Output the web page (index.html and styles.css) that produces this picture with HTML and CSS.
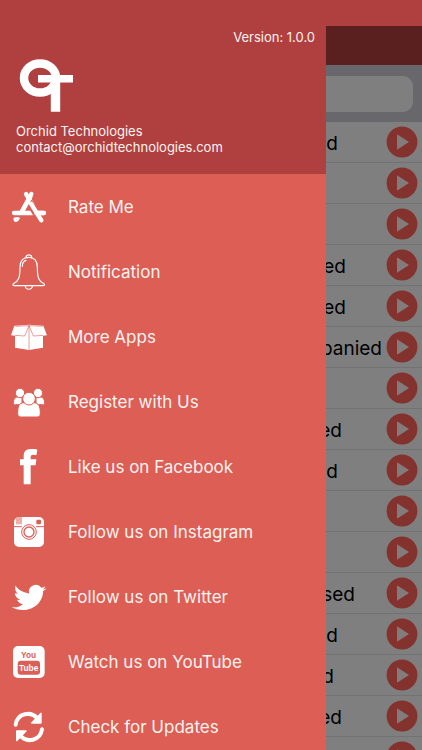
FILE: index.html
```html
<!DOCTYPE html>
<html lang="en">
<head>
    <meta charset="UTF-8">
    <meta name="viewport" content="width=device-width, initial-scale=1.0">
    <title>Orchid Technologies</title>
    <link rel="stylesheet" href="styles.css">
</head>
<body>
    <svg class="sprite" aria-hidden="true">
        <symbol id="play" viewBox="0 0 32 32">
            <circle cx="16" cy="16" r="15.4" fill="#84322e"/>
            <path d="M11 8.2v15.6L23 16z" fill="#827c7c"/>
        </symbol>
    </svg>
    <div class="screen">
        <aside class="drawer">
            <header class="profile">
                <div class="version">Version: 1.0.0</div>
                <svg class="logo" viewBox="0 0 56 54" aria-label="Orchid Technologies logo">
                    <ellipse cx="24" cy="20" rx="16" ry="14.6" fill="none" stroke="#fff" stroke-width="8.5"/>
                    <path d="M22 17h35v7.6H44.2v29.2h-9.4V24.6H22z" fill="#fff"/>
                </svg>
                <div class="company">Orchid Technologies</div>
                <div class="email">contact@orchidtechnologies.com</div>
            </header>
            <nav class="menu">
                <a href="#rate">
                    <svg viewBox="0 0 108 108" fill="none" stroke="#fff" stroke-width="13" stroke-linecap="round">
                        <path d="M9 72h90"/>
                        <path d="M61 15L31 70"/>
                        <path d="M45 15L64 46" />
                        <path d="M54 37l37 66" stroke="#dc5e55" stroke-width="20" stroke-linecap="butt"/>
                        <path d="M76 72h22"/>
                        <path d="M60 44l31 50"/>
                        <path d="M58 24L33 68"/>
                        <path d="M8 86c7-3 13-3 19 0-2 6-5 12-12 13-6 0-9-6-7-13z" fill="#fff" stroke="none"/>
                    </svg>
                    <span>Rate Me</span>
                </a>
                <a href="#notification">
                    <svg viewBox="0 0 108 108" fill="none" stroke="#fff" stroke-width="3.5" stroke-linecap="round" stroke-linejoin="round">
                        <path d="M53 10C35 10 27 22 27 40c0 30-4 41-18 48-5 3-4 7 1 7h86c5 0 6-4 1-7-14-7-18-18-18-48 0-18-8-30-26-30z"/>
                        <path d="M45 11c0-11 17-11 17 0M43 96c1 13 20 13 21 0M34 37c0-10 4-16 11-18"/>
                    </svg>
                    <span>Notification</span>
                </a>
                <a href="#apps">
                    <svg viewBox="0 0 108 108">
                        <path d="M10 20l44-3 43 3 11 29-12 1v36l-42 7-42-7V50L0 49z" fill="#fff"/>
                        <path d="M12 49l29 2 13-31 13 31 29-2M54 20v72M13 22l41-2 41 2" fill="none" stroke="#dc5e55" stroke-width="1.8"/>
                    </svg>
                    <span>More Apps</span>
                </a>
                <a href="#register">
                    <svg viewBox="0 0 108 108" fill="#fff" stroke="#dc5e55" stroke-width="3">
                        <path d="M7 60c0-17 6-21 16-21h10v23H13c-4 0-6 0-6-2zM101 60c0-17-6-21-16-21H75v23h20c4 0 6 0 6-2z"/>
                        <circle cx="27" cy="27" r="14"/>
                        <circle cx="81" cy="27" r="14"/>
                        <path d="M20 89c0-23 4-32 19-33 9 6 20 6 29 0 15 1 20 10 20 33 0 7-4 10-11 10H31c-7 0-11-3-11-10z"/>
                        <circle cx="54" cy="44" r="19"/>
                    </svg>
                    <span>Register with Us</span>
                </a>
                <a href="#facebook">
                    <svg viewBox="0 0 108 108">
                        <path d="M38 106V49H27V31h11V22C38 6 45 0 60 0c8 0 14 0 19 2l-3 17c-10-3-17-2-17 6v6h17l-2 18H59v57z" fill="#fff"/>
                    </svg>
                    <span>Like us on Facebook</span>
                </a>
                <a href="#instagram">
                    <svg viewBox="0 0 108 108">
                        <rect x="9" y="9" width="90" height="90" rx="15" fill="#fff"/>
                        <g fill="none" stroke="#dc5e55" stroke-width="3">
                            <path d="M18 11v20M24 9v22M30 9v22M9 38h24M75 38h24"/>
                            <circle cx="54" cy="54" r="22"/>
                            <circle cx="54" cy="54" r="15" stroke-width="4"/>
                        </g>
                        <rect x="76" y="17" width="14" height="14" rx="3" fill="#dc5e55"/>
                    </svg>
                    <span>Follow us on Instagram</span>
                </a>
                <a href="#twitter">
                    <svg viewBox="0 0 24 24">
                        <path d="M23.8 6.200a7 7 0 0 1-2.600.8 4.500 4.500 0 0 0 1.800-2.200 8 8 0 0 1-2.700 1 4.600 4.600 0 0 0-8.200 3.800C8.500 9 5 7.500 3 4.300c-.6 2.200 0 4.200 1.600 5.600-.8 0-1.500-.2-2-.5 0 2 1.300 3.800 3.400 4.400-.6.200-1.300.200-1.900.1.600 1.700 2 2.700 3.900 2.900-2 1.700-4.600 2.400-7.700 1.900 2.200 1.400 4.700 2 7.400 2 8.600 0 13.700-6.200 13.700-12.700 1-.5 1.700-1.100 2.400-1.800z" fill="#fff"/>
                    </svg>
                    <span>Follow us on Twitter</span>
                </a>
                <a href="#youtube">
                    <svg class="youtube" viewBox="0 0 108 108" text-anchor="middle">
                        <rect x="6" y="6" width="95" height="96" rx="15" fill="#fff"/>
                        <rect x="20" y="50" width="67" height="42" rx="9" fill="#dc5e55"/>
                        <text x="53" y="42" fill="#dc5e55">You</text>
                        <text x="53" y="80" fill="#fff">Tube</text>
                    </svg>
                    <span>Watch us on YouTube</span>
                </a>
                <a href="#updates">
                    <svg viewBox="0 0 108 108" fill="none" stroke="#fff" stroke-width="12" stroke-linecap="round">
                        <path d="M14 47C19 12 60 5 80 29M93 61C88 96 47 103 27 79"/>
                        <path d="M90 13v29H62zM17 95V66h28z" fill="#fff" stroke-width="4" stroke-linejoin="round"/>
                    </svg>
                    <span>Check for Updates</span>
                </a>
            </nav>
        </aside>
        <main class="verbs">
            <div class="status-bar"></div>
            <div class="title-bar"></div>
            <div class="search"><input type="search" aria-label="Search"></div>
            <ul class="list">
                <li><span class="end-s">ed</span><button aria-label="Play"><svg><use href="#play"/></svg></button></li>
                <li><span></span><button aria-label="Play"><svg><use href="#play"/></svg></button></li>
                <li><span></span><button aria-label="Play"><svg><use href="#play"/></svg></button></li>
                <li><span class="end-l">ed</span><button aria-label="Play"><svg><use href="#play"/></svg></button></li>
                <li><span class="end-l">ed</span><button aria-label="Play"><svg><use href="#play"/></svg></button></li>
                <li><span class="end-full">panied</span><button aria-label="Play"><svg><use href="#play"/></svg></button></li>
                <li><span></span><button aria-label="Play"><svg><use href="#play"/></svg></button></li>
                <li><span class="end-m">ed</span><button aria-label="Play"><svg><use href="#play"/></svg></button></li>
                <li><span class="end-s">ed</span><button aria-label="Play"><svg><use href="#play"/></svg></button></li>
                <li><span></span><button aria-label="Play"><svg><use href="#play"/></svg></button></li>
                <li><span></span><button aria-label="Play"><svg><use href="#play"/></svg></button></li>
                <li><span class="end-xl">sed</span><button aria-label="Play"><svg><use href="#play"/></svg></button></li>
                <li><span class="end-s">ed</span><button aria-label="Play"><svg><use href="#play"/></svg></button></li>
                <li><span class="end-xs">d</span><button aria-label="Play"><svg><use href="#play"/></svg></button></li>
                <li><span class="end-m">ed</span><button aria-label="Play"><svg><use href="#play"/></svg></button></li>
                <li><span></span><button aria-label="Play"><svg><use href="#play"/></svg></button></li>
            </ul>
        </main>
    </div>
</body>
</html>
```
FILE: styles.css
```css
:root {
    --header: #b0403f;
    --menu: #dc5e55;
    --dimmed: #7f7f7f;
}
* {
    box-sizing: border-box;
}
body {
    margin: 0;
    font-family: Inter, "Liberation Sans", sans-serif;
    background-color: var(--menu);
}
.sprite {
    position: absolute;
    width: 0;
    height: 0;
}
.screen {
    display: grid;
    grid-template-columns: 1fr 96px;
    height: 100vh;
    overflow: hidden;
}
.drawer {
    background-color: var(--menu);
    color: #fff3f1;
    min-width: 0;
}
.profile {
    background-color: var(--header);
    padding: 28px 11px 19px 16px;
    font-size: 13px;
    line-height: 16px;
}
.version {
    text-align: right;
    line-height: 18px;
}
.logo {
    display: block;
    width: 56px;
    height: 54px;
    margin: 12px 0 11px;
    overflow: visible;
}
.menu a {
    display: flex;
    align-items: center;
    gap: 21px;
    height: 65px;
    padding-left: 11px;
    color: inherit;
    font-size: 17px;
    text-decoration: none;
    white-space: nowrap;
}
.menu svg {
    flex: none;
    width: 36px;
    height: 36px;
}
.youtube text {
    font-family: "Liberation Sans", sans-serif;
    font-size: 25px;
    font-weight: bold;
}
.verbs {
    background-color: var(--dimmed);
    min-width: 0;
}
.status-bar {
    height: 26px;
    background-color: var(--header);
}
.title-bar {
    height: 39px;
    background-color: #5a1f1f;
}
.search {
    padding: 11px 9px 10px 0;
    background-color: #67676c;
}
.search input {
    display: block;
    width: 100%;
    height: 36px;
    border: none;
    border-radius: 0 10px 10px 0;
    background-color: var(--dimmed);
    appearance: none;
}
.list {
    margin: 0;
    padding: 0;
    list-style: none;
}
.list li {
    display: flex;
    align-items: center;
    justify-content: space-between;
    height: 41px;
    padding-right: 4px;
    border-bottom: 1px solid #727275;
}
/* words run out from under the drawer */
.list span {
    display: flex;
    justify-content: flex-end;
    overflow: hidden;
    padding-top: 3px;
    color: #000;
    font-size: 19px;
    line-height: 24px;
}
.end-xs { width: 8px; }
.end-s { width: 12px; }
.end-m { width: 16px; }
.end-l { width: 20px; }
.end-xl { width: 29px; }
.end-full { width: 56px; }
.list button {
    flex: none;
    padding: 0;
    border: none;
    background: none;
}
.list button svg {
    display: block;
    width: 32px;
    height: 32px;
}
```
